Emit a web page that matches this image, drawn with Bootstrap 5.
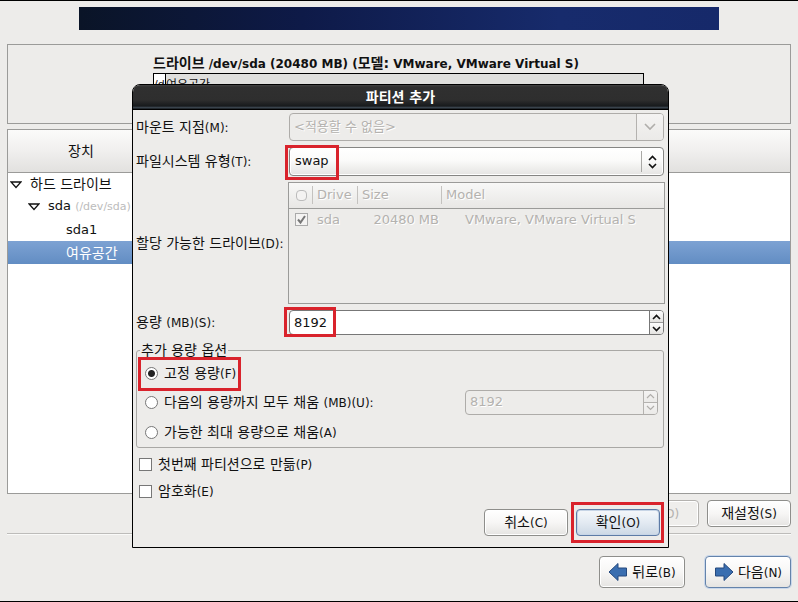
<!DOCTYPE html>
<html lang="ko">
<head>
<meta charset="utf-8">
<meta name="viewport" content="width=device-width, initial-scale=1">
<title>파티션 추가</title>
<link href="https://cdn.jsdelivr.net/npm/bootstrap@5.3.0/dist/css/bootstrap.min.css" rel="stylesheet">
<style>
  :root { --face: #edecea; --line: #9b9b99; --dim: #b4b2af; --accent: #d9232c; }
  body { background: var(--face); color: #111; font: 13px/20px "DejaVu Sans", "Noto Sans CJK KR", sans-serif; }
  .ko { font-size: 14px; }
  .ko i { font-style: normal; font-size: 12px; }
  .installer { min-height: 100vh; border-top: 1px solid #000; border-bottom: 1px solid #000; padding: 6px 7px 13px; }
  .banner { height: 23px; margin: 0 72px 14px; background: linear-gradient(90deg, #0a1427, #0e1a48 35%, #172b6c 75%, #16296a); }
  .drive-map { height: 80px; border: 1px solid var(--line); padding: 10px 146px 0 145px; margin-bottom: 5px; }
  .drive-map h1 { font-size: 12px; line-height: 18px; font-weight: 700; margin: 0; white-space: nowrap; }
  .drive-map h1 span { font-size: 14px; line-height: 1; }
  .disk-bar { height: 36px; border: 1px solid #000; background: #dfdfdd; font-size: 12px; line-height: 22px; }
  .disk-bar span:first-child { width: 12px; background: #fff; border-right: 1px solid #000; font-size: 11px; }
  .tree-pane { border: 1px solid var(--line); background: #fff; margin-bottom: 6px; }
  .tree-pane table { width: 100%; }
  .tree-pane th { height: 42px; font-weight: 400; text-align: center; vertical-align: middle; border-bottom: 1px solid var(--line); background: linear-gradient(#fbfbfa, #f0efee 50%, #e2e1df); }
  .tree-pane th:first-child { width: 146px; }
  .tree-pane td { height: 23px; white-space: nowrap; padding: 0 0 0 2px; }
  .tree-pane .level-1 { padding-left: 20px; }
  .tree-pane .level-2 { padding-left: 58px; }
  .tree-pane tr.chosen td { color: #fff; background: linear-gradient(#7da2d3, #628dc3); }
  .tree-pane small { font-size: 11px; color: #bcbcbc; }
  .gtk-btn { width: 84px; height: 27px; padding: 0; border: 1px solid #8e8e8b; border-radius: 4px; background: linear-gradient(#fff, #f7f6f5 50%, #e5e4e2); color: #111; line-height: 20px; box-shadow: inset 0 0 0 1px #fff; white-space: nowrap; }
  .gtk-btn:disabled { color: var(--dim); background: #efeeec; border-color: #b4b2af; opacity: 1; }
  .nav-steps { gap: 20px; }
  .gtk-btn.nav-step { width: 86px; height: 32px; }
  .gtk-btn.focused { border-color: #6483ab; box-shadow: 0 0 0 1px #c9d7ea; }
  .gtk-btn.confirm { border-color: #5d7ba6; background: linear-gradient(#f5f8fb, #e3eaf2 50%, #ccd8e5); box-shadow: inset 0 0 0 1px #c7d5e6; }
  .rule { border-top: 1px solid #bdbcba; border-bottom: 1px solid #fafaf9; margin: 6px 0 21px; }
  .add-dialog { position: absolute; top: 84px; left: 132px; right: 129px; border: 1px solid #000; border-radius: 8px 8px 0 0; background: var(--face); overflow: hidden; }
  .add-dialog h2 { margin: 0; height: 25px; font-size: 14px; font-weight: 700; line-height: 24px; text-align: center; color: #fff; background: linear-gradient(#444 0, #303030 2px, #2e2e2e 60%, #171a1c 21px, #44515c 23px, #000 24px); }
  .add-dialog form { padding: 3px 4px 11px 3px; }
  .fields { display: grid; grid-template-columns: 153px minmax(0, 1fr); align-items: center; row-gap: 6px; }
  .fields > label, .fields > .caption { white-space: nowrap; }
  .edit { height: 28px; border: 1px solid #777; border-radius: 4px; background: #fff; overflow: hidden; }
  .edit input { min-width: 0; border: 0; padding: 0 4px; background: transparent; color: #111; outline: 0; line-height: 20px; }
  .edit input:disabled { color: var(--dim); text-shadow: 1px 1px #fff; }
  .edit.off { background: var(--face); border-color: #aeaca9; }
  .edit.spin { height: 25px; }
  .edit button { border: 0; padding: 0; display: flex; align-items: center; justify-content: center; color: #111; background: linear-gradient(#fdfdfd, #e4e3e1); }
  .edit.off button { color: #b0aeab; background: linear-gradient(#f4f3f2, #ebeae8); }
  .edit .drop { width: 27px; border-left: 1px solid #b4b2af; }
  .steps { width: 14px; border-left: 1px solid #777; }
  .steps button + button { border-top: 1px solid #999; }
  .off .steps { border-color: #b4b2af; }
  .off .steps button + button { border-color: #b4b2af; }
  .pick select { display: block; width: 100%; height: 29px; appearance: none; border: 1px solid #858583; border-radius: 4px; padding: 0 30px 2px 5px; color: #111; background: linear-gradient(#fff, #fbfbfa 45%, #e5e4e2); box-shadow: inset 0 0 0 1px #fff; }
  .pick .arrows { position: absolute; right: 1px; top: 4px; bottom: 4px; width: 22px; border-left: 1px solid #a9a8a5; pointer-events: none; }
  .drives { height: 122px; border: 1px solid var(--line); margin: 0 -1px; color: var(--dim); text-shadow: 1px 1px #fff; }
  .drives table { width: 100%; table-layout: fixed; }
  .drives .col-tick { width: 23px; }
  .drives .col-drive { width: 45px; }
  .drives .col-size { width: 84px; }
  .drives th { height: 25px; padding: 0; font-weight: 400; border-bottom: 1px solid var(--line); background: linear-gradient(#f8f8f7, #e8e7e5); }
  .drives th span { display: block; border-left: 1px solid #c4c2bf; padding-left: 4px; line-height: 18px; }
  .drives td { height: 23px; padding: 0 2px 0 5px; white-space: nowrap; }
  .drives .tick { padding: 0; }
  .drives input, .choice input { appearance: none; flex: none; display: block; width: 13px; height: 13px; margin: 0; border: 1px solid #777; background: #fff; }
  .drives .tick input { margin-left: 6px; border-color: #aaa; background: #f4f3f2; }
  .drives th.tick input { width: 11px; height: 11px; border-radius: 4px; border-color: #bbb; margin-left: 7px; }
  .drives .tick div { position: relative; }
  .drives .tick svg { position: absolute; left: 7px; top: 1px; }
  .choice input[type=radio] { border-radius: 50%; }
  .choice input[type=radio]:checked { background: radial-gradient(circle, #222 0 3px, #fff 4px); }
  .choice label { white-space: nowrap; }
  .sizing { border: 1px solid #a9a8a5; border-radius: 3px; margin: 5px 0 3px; padding: 0 5px 0 8px; }
  .sizing legend { font-size: 14px; line-height: 20px; padding: 0 1px; margin: 0 0 0 -5px; }
  .sizing .choice { height: 30px; gap: 6px; }
  .sizing .choice:first-of-type { height: 27px; }
  .sizing .edit { width: 193px; }
  .extra { height: 27px; gap: 6px; padding-left: 3px; }
  .callout { position: relative; }
  .callout::after { content: ""; position: absolute; border: 3px solid var(--accent); pointer-events: none; }
  .around-type::after { left: -4px; top: -2px; width: 54px; height: 35px; }
  .around-size::after { left: -5px; top: -3px; width: 52px; height: 30px; }
  .around-fixed { gap: 6px; }
  .around-fixed::after { inset: -6px -5px -7px -7px; }
  .around-ok::after { inset: -7px -4px -7px -5px; }
</style>
</head>
<body>
<main class="installer d-flex flex-column">
  <div class="banner"></div>
  <section class="drive-map">
    <h1><span>드라이브</span> /dev/sda (20480 MB) (<span>모델:</span> VMware, VMware Virtual S)</h1>
    <div class="disk-bar d-flex"><span>/d</span><span>여유공간</span></div>
  </section>
  <section class="tree-pane flex-grow-1">
    <table>
      <thead><tr><th scope="col" class="ko">장치</th><th></th></tr></thead>
      <tbody>
        <tr><td class="ko"><svg width="12" height="8" viewBox="0 0 12 8" class="me-2"><path d="M1 1h10L6 6.500z" fill="#fff" stroke="#111" stroke-width="1.300"/></svg>하드 드라이브</td><td></td></tr>
        <tr><td class="level-1"><svg width="12" height="8" viewBox="0 0 12 8" class="me-2"><path d="M1 1h10L6 6.500z" fill="#fff" stroke="#111" stroke-width="1.300"/></svg>sda <small>(/dev/sda)</small></td><td></td></tr>
        <tr><td class="level-2">sda1</td><td></td></tr>
        <tr class="chosen"><td class="level-2 ko">여유공간</td><td></td></tr>
      </tbody>
    </table>
  </section>
  <div class="d-flex justify-content-end gap-2">
    <button type="button" class="gtk-btn ko" disabled>삭제<i>(D)</i></button>
    <button type="button" class="gtk-btn ko">재설정<i>(S)</i></button>
  </div>
  <div class="rule"></div>
  <div class="nav-steps d-flex justify-content-end">
    <button type="button" class="gtk-btn nav-step ko d-flex align-items-center justify-content-center"><svg width="20" height="20" viewBox="0 0 20 20" class="me-1"><path d="M1 10L10 1.500V6h8.500v8H10v4.500z" fill="#3a6eb0" stroke="#25497e"/></svg><span>뒤로<i>(B)</i></span></button>
    <button type="button" class="gtk-btn nav-step focused ko d-flex align-items-center justify-content-center"><svg width="20" height="20" viewBox="0 0 20 20" class="me-1"><path d="M19 10L10 1.500V6H1.500v8H10v4.500z" fill="#3a6eb0" stroke="#25497e"/></svg><span>다음<i>(N)</i></span></button>
  </div>
</main>

<section class="add-dialog" role="dialog" aria-labelledby="dialog-title">
  <h2 id="dialog-title">파티션 추가</h2>
  <form>
    <div class="fields">
      <label for="mount" class="ko">마운트 지점<i>(M):</i></label>
      <div class="edit off d-flex">
        <input id="mount" class="flex-grow-1" value="&lt;적용할 수 없음&gt;" disabled>
        <button type="button" class="drop" aria-label="마운트 지점 목록" disabled><svg width="12" height="8" viewBox="0 0 12 8"><path d="M1 1l5 5 5-5" fill="none" stroke="currentColor" stroke-width="1.600"/></svg></button>
      </div>
      <label for="fstype" class="ko">파일시스템 유형<i>(T):</i></label>
      <div class="pick callout around-type">
        <select id="fstype"><option>swap</option></select>
        <span class="arrows d-flex align-items-center justify-content-center"><svg width="9" height="14" viewBox="0 0 9 14"><path d="M1 5l3.500-3.500L8 5M1 9l3.500 3.500L8 9" fill="none" stroke="#111" stroke-width="1.600"/></svg></span>
      </div>
      <div class="caption ko">할당 가능한 드라이브<i>(D):</i></div>
      <div class="drives">
        <table aria-label="할당 가능한 드라이브">
          <colgroup><col class="col-tick"><col class="col-drive"><col class="col-size"><col></colgroup>
          <thead><tr><th class="tick"><input type="radio" aria-label="모두 선택" disabled></th><th scope="col"><span>Drive</span></th><th scope="col"><span>Size</span></th><th scope="col"><span>Model</span></th></tr></thead>
          <tbody><tr>
            <td class="tick"><div><input type="checkbox" aria-label="sda" checked disabled><svg width="11" height="11" viewBox="0 0 11 11"><path d="M2 5.500l2.500 3L9 2" fill="none" stroke="#777" stroke-width="2"/></svg></div></td>
            <td>sda</td><td class="text-end">20480 MB</td><td class="ps-4">VMware, VMware Virtual S</td>
          </tr></tbody>
        </table>
      </div>
      <label for="size" class="ko">용량 <i>(MB)(S):</i></label>
      <div class="callout around-size">
        <div class="edit spin d-flex">
          <input id="size" class="flex-grow-1" inputmode="numeric" value="8192">
          <div class="steps d-flex flex-column">
            <button type="button" class="flex-fill" aria-label="용량 늘리기"><svg width="9" height="6" viewBox="0 0 9 6"><path d="M1 5l3.500-3.500L8 5" fill="none" stroke="currentColor" stroke-width="1.600"/></svg></button>
            <button type="button" class="flex-fill" aria-label="용량 줄이기"><svg width="9" height="6" viewBox="0 0 9 6"><path d="M1 1l3.500 3.500L8 1" fill="none" stroke="currentColor" stroke-width="1.600"/></svg></button>
          </div>
        </div>
      </div>
    </div>

    <fieldset class="sizing">
      <legend class="float-none w-auto">추가 용량 옵션</legend>
      <div class="choice d-flex align-items-center">
        <div class="callout around-fixed d-flex align-items-center"><input type="radio" name="grow" id="fixed" checked><label for="fixed" class="ko">고정 용량<i>(F)</i></label></div>
      </div>
      <div class="choice d-flex align-items-center">
        <input type="radio" name="grow" id="upto"><label for="upto" class="ko">다음의 용량까지 모두 채움 <i>(MB)(U):</i></label>
        <div class="edit spin off d-flex ms-auto">
          <input class="flex-grow-1 h-auto border-0 bg-transparent" aria-label="최대 용량 (MB)" value="8192" disabled>
          <div class="steps d-flex flex-column">
            <button type="button" class="flex-fill" aria-label="최대 용량 늘리기" disabled><svg width="9" height="6" viewBox="0 0 9 6"><path d="M1 5l3.500-3.500L8 5" fill="none" stroke="currentColor" stroke-width="1.200"/></svg></button>
            <button type="button" class="flex-fill" aria-label="최대 용량 줄이기" disabled><svg width="9" height="6" viewBox="0 0 9 6"><path d="M1 1l3.500 3.500L8 1" fill="none" stroke="currentColor" stroke-width="1.200"/></svg></button>
          </div>
        </div>
      </div>
      <div class="choice d-flex align-items-center"><input type="radio" name="grow" id="max"><label for="max" class="ko">가능한 최대 용량으로 채움<i>(A)</i></label></div>
    </fieldset>

    <div class="choice extra d-flex align-items-center"><input type="checkbox" id="primary"><label for="primary" class="ko">첫번째 파티션으로 만듦<i>(P)</i></label></div>
    <div class="choice extra d-flex align-items-center"><input type="checkbox" id="encrypt"><label for="encrypt" class="ko">암호화<i>(E)</i></label></div>

    <div class="d-flex justify-content-end gap-2 pt-1 pe-1">
      <button type="button" class="gtk-btn ko">취소<i>(C)</i></button>
      <div class="callout around-ok d-flex"><button type="submit" class="gtk-btn confirm ko">확인<i>(O)</i></button></div>
    </div>
  </form>
</section>
<script src="https://cdn.jsdelivr.net/npm/bootstrap@5.3.0/dist/js/bootstrap.bundle.min.js"></script>
</body>
</html>
